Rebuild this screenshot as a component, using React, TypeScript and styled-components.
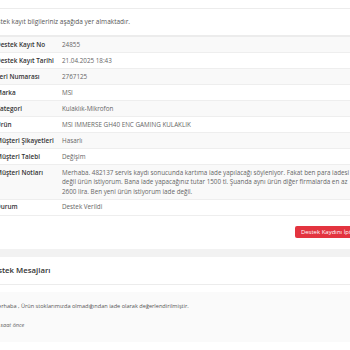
import styled, { createGlobalStyle } from "styled-components";

const GlobalStyle = createGlobalStyle`
  html, body {
    margin: 0;
    padding: 0;
    background: #ffffff;
    overflow: hidden;
  }
  body {
    font-family: "Open Sans", "Noto Sans", sans-serif;
    color: #333;
  }
`;

const Page = styled.div`
  width: 398px;
  margin-left: -20px;
  margin-top: -19px;
  background: #f2f2f2;
  display: flex;
  flex-direction: column;
  gap: 8px;
`;

const Card = styled.div`
  background: #fff;
  display: flex;
  flex-direction: column;
`;

const CardHeader = styled.div`
  padding: 8.5px 8px;
  border-bottom: 1px solid #ececec;
  font-size: 7.8px;
  font-weight: 600;
  color: #333;
  line-height: 10px;
`;

const CardBody = styled.div`
  padding: 9px 9px 11px;
  display: flex;
  flex-direction: column;
`;

const Intro = styled.p`
  margin: 0 0 9px;
  font-size: 6.5px;
  color: #555;
  line-height: 8px;
`;

const Table = styled.div`
  display: flex;
  flex-direction: column;
  border-top: 2px solid #ececec;
`;

const Row = styled.div<{ $striped?: boolean }>`
  display: grid;
  grid-template-columns: 73px 1fr;
  background: ${(p) => (p.$striped ? "#f9f9f9" : "#fff")};
  border-bottom: 1px solid #eeeeee;
  padding: 2.5px 0;
  line-height: 10px;
`;

const Label = styled.div`
  padding-left: 7px;
  font-size: 6.4px;
  font-weight: 600;
  color: #333;
`;

const Value = styled.div`
  font-size: 6.3px;
  color: #666;
  white-space: nowrap;
`;

const NoteLine = styled.span`
  display: block;
  line-height: 9.6px;
`;

const Actions = styled.div`
  display: flex;
  justify-content: flex-end;
  padding-top: 10px;
`;

const DangerButton = styled.button`
  background: #e3343f;
  color: #fff;
  border: none;
  border-radius: 2px;
  font-family: inherit;
  font-size: 6px;
  padding: 3px 6px;
  line-height: 6px;
`;

const MessagesBody = styled.div`
  padding: 7px 9px 9px 5px;
  border-bottom: 1px solid #ececec;
`;

const MessageItem = styled.div`
  background: #fafafa;
  padding: 11.5px 8px 12.5px;
  display: flex;
  flex-direction: column;
  gap: 12px;
`;

const MessageText = styled.div`
  font-size: 5.6px;
  color: #555;
  line-height: 7px;
`;

const MessageTime = styled.div`
  font-size: 5.6px;
  font-style: italic;
  color: #666;
  line-height: 7px;
`;

const rows: [string, string | string[]][] = [
  ["Destek Kayıt No", "24855"],
  ["Destek Kayıt Tarihi", "21.04.2025 18:43"],
  ["Seri Numarası", "2767125"],
  ["Marka", "MSI"],
  ["Kategori", "Kulaklık-Mikrofon"],
  ["Ürün", "MSI IMMERSE GH40 ENC GAMING KULAKLIK"],
  ["Müşteri Şikayetleri", "Hasarlı"],
  ["Müşteri Talebi", "Değişim"],
  [
    "Müşteri Notları",
    [
      "Merhaba. 482137 servis kaydı sonucunda kartıma iade yapılacağı söyleniyor. Fakat ben para iadesi",
      "değil ürün istiyorum. Bana iade yapacağınız tutar 1500 tl. Şuanda aynı ürün diğer firmalarda en az",
      "2600 lira. Ben yeni ürün istiyorum iade değil.",
    ],
  ],
  ["Durum", "Destek Verildi"],
];

export default function App() {
  return (
    <>
      <GlobalStyle />
      <Page>
        <Card>
          <CardHeader>Destek Kaydı Detayı</CardHeader>
          <CardBody>
            <Intro>Destek kayıt bilgileriniz aşağıda yer almaktadır.</Intro>
            <Table>
              {rows.map(([label, value], i) => (
                <Row key={label} $striped={i % 2 === 0}>
                  <Label>{label}</Label>
                  <Value>
                    {Array.isArray(value)
                      ? value.map((line, j) => <NoteLine key={j}>{line}</NoteLine>)
                      : value}
                  </Value>
                </Row>
              ))}
            </Table>
            <Actions>
              <DangerButton>Destek Kaydını İptal Et</DangerButton>
            </Actions>
          </CardBody>
        </Card>
        <Card>
          <CardHeader>Destek Mesajları</CardHeader>
          <MessagesBody>
            <MessageItem>
              <MessageText>
                Merhaba , Ürün stoklarımızda olmadığından iade olarak değerlendirilmiştir.
              </MessageText>
              <MessageTime>11 saat önce</MessageTime>
            </MessageItem>
          </MessagesBody>
        </Card>
      </Page>
    </>
  );
}
